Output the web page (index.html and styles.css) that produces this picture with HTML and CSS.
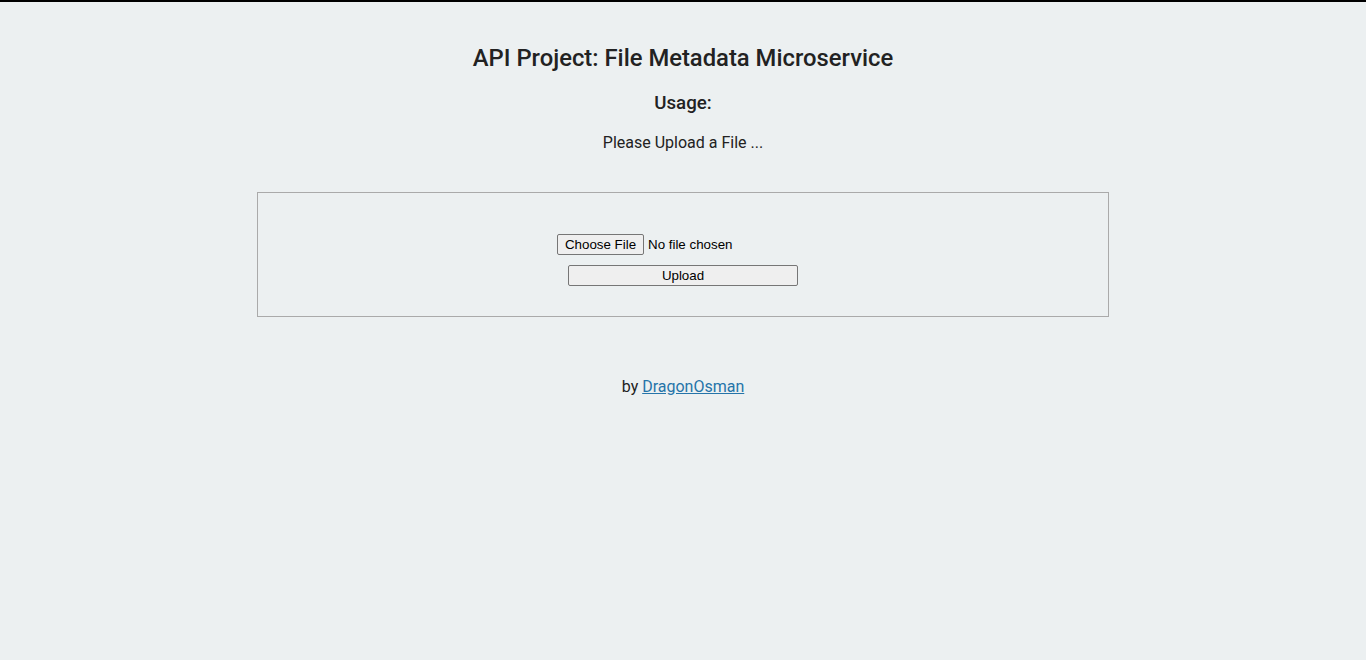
FILE: index.html
```html
<!DOCTYPE html>
<html>
<head>
<meta charset="utf-8">
<title>File Metadata Microservice</title>
<link rel="stylesheet" href="styles.css">
</head>
<body>
<div class="container">
  <h2>API Project: File Metadata Microservice</h2>
  <h3>Usage:</h3>
  <p>Please Upload a File ...</p>
  <div class="view">
    <h4 class="output"></h4>
    <form>
      <div class="file-row">
        <span class="choose">Choose File</span><span class="nofile">No file chosen</span>
      </div>
      <button type="button" class="upload">Upload</button>
    </form>
  </div>
</div>
<div class="footer">
  <p>by <a href="#">DragonOsman</a></p>
</div>
</body>
</html>
```

FILE: styles.css
```css
html {
  border-top: 2px solid #000;
  background: #ECF0F1;
}
body {
  margin: 8px;
  margin-top: 2px;
  font-family: Roboto, "Liberation Sans", sans-serif;
  font-size: 16px;
  color: #222;
  background-color: #ECF0F1;
  text-align: center;
}
.container {
  padding: 0;
  margin-top: 40px;
}
h2 {
  font-size: 23.8px;
  font-weight: 500;
  margin: 20px 0;
}
h3 {
  font-size: 18.72px;
  font-weight: 500;
  margin: 18.72px 0;
}
p {
  margin: 16px 0;
}
.view {
  margin: 40px auto 10px;
  width: 60%;
  border: 1px solid #aaa;
  padding: 20px;
}
.output {
  margin: 21.28px 0;
}
form {
  margin: 0;
}
.file-row {
  display: flex;
  justify-content: center;
  align-items: center;
  height: 21px;
  font-family: "Liberation Sans", Arial, sans-serif;
  font-size: 13.33px;
  color: #000;
}
.choose {
  box-sizing: border-box;
  height: 21px;
  width: 87px;
  display: flex;
  align-items: center;
  justify-content: center;
  background: #efefef;
  border: 1px solid #767676;
  border-radius: 2px;
  margin-right: 4px;
}
.nofile {
  width: 161px;
  text-align: left;
}
.upload {
  display: block;
  box-sizing: border-box;
  margin: 10px auto;
  width: 230px;
  height: 21px;
  padding: 0;
  font-family: "Liberation Sans", Arial, sans-serif;
  font-size: 13.33px;
  color: #000;
  background: #efefef;
  border: 1px solid #767676;
  border-radius: 2px;
}
.footer {
  margin-top: 60px;
}
a {
  color: #2574A9;
}
```
